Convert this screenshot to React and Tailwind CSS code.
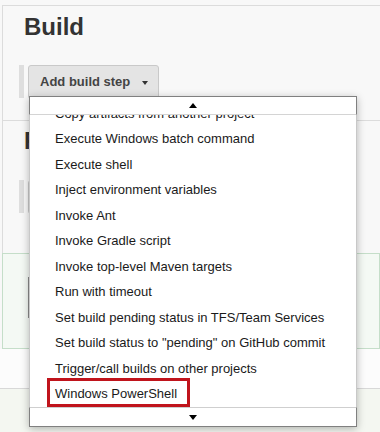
export default function App() {
  const items = [
    "Copy artifacts from another project",
    "Execute Windows batch command",
    "Execute shell",
    "Inject environment variables",
    "Invoke Ant",
    "Invoke Gradle script",
    "Invoke top-level Maven targets",
    "Run with timeout",
    "Set build pending status in TFS/Team Services",
    'Set build status to "pending" on GitHub commit',
    "Trigger/call builds on other projects",
    "Windows PowerShell",
  ];
  return (
    <div className="relative w-[380px] h-[432px] overflow-hidden bg-[#f8f8f8] font-['Liberation_Sans',Arial,sans-serif]">
      <div className="h-[5px]" />
      {/* Build section */}
      <section className="ml-[2px] h-[115px] border-t border-l border-[#dcdcdc] flex flex-col">
        <h1 className="ml-[21px] mt-[7px] text-[24px] leading-[28px] font-bold text-[#333]">Build</h1>
        <div className="mt-[24px] flex items-start gap-[4px] ml-[16px]">
          <div className="w-[5px] h-[33px] bg-[#dedede]" />
          <div className="w-[131px] h-[34px] rounded-[3px] border border-[#c9c9c9] bg-[#e4e4e4] flex items-center pl-[11px] pb-[1px] text-[13px] font-bold text-[#444]">
            <span>Add build step</span>
            <span className="ml-[12px] mt-[2px] w-0 h-0 border-l-[3.5px] border-r-[3.5px] border-t-[4px] border-l-transparent border-r-transparent border-t-[#333]" />
          </div>
        </div>
      </section>
      {/* Post-build section */}
      <section className="ml-[2px] h-[133px] border-t border-l border-[#dcdcdc] flex flex-col">
        <h2 className="ml-[21px] mt-[6px] text-[24px] leading-[28px] font-bold text-[#333]">Post-build Actions</h2>
        <div className="mt-[25px] flex items-start gap-[4px] ml-[16px]">
          <div className="w-[5px] h-[33px] bg-[#dedede]" />
          <div className="w-[170px] h-[34px] rounded-[3px] border border-[#c9c9c9] bg-[#e4e4e4]" />
        </div>
      </section>
      {/* Green box */}
      <div className="ml-[2px] h-[96px] border border-[#c5dec9] bg-[#f4f9f4] pt-[23px] pl-[25px]">
        <div className="w-[80px] h-[41px] border border-[#8a8a8a] bg-white" />
      </div>
      <div className="h-[40px] bg-[#fcfcfc] border-b border-[#d8d8d8]" />
      <div className="h-[60px] bg-[#f4f7f1]" />

      {/* Dropdown menu overlay */}
      <div className="absolute left-[29px] top-[96px] w-[328px] flex flex-col shadow-[0_2px_8px_rgba(0,0,0,0.28)]">
        <div className="h-[19px] bg-white border-t border-x border-b border-t-[#808080] border-x-[#808080] border-b-[#d4d4d4] flex items-center justify-center">
          <span className="w-0 h-0 border-l-[4.5px] border-r-[4.5px] border-b-[5px] border-l-transparent border-r-transparent border-b-black" />
        </div>
        <div className="h-[292px] bg-white border-x border-[#c8c8c8] overflow-hidden">
          <div className="mt-[-14.25px] flex flex-col">
            {items.map((t) => (
              <div key={t} className="h-[25.5px] leading-[25.5px] pl-[25px] text-[13px] text-[#1a1a1a] whitespace-nowrap">
                {t}
              </div>
            ))}
          </div>
        </div>
        <div className="h-[20px] bg-white border border-[#808080] border-t-[#cfcfcf] flex items-center justify-center">
          <span className="w-0 h-0 border-l-[4.5px] border-r-[4.5px] border-t-[5px] border-l-transparent border-r-transparent border-t-black" />
        </div>
      </div>

      {/* Red highlight annotation */}
      <div className="absolute left-[47px] top-[378px] w-[143px] h-[29px] border-[3px] border-[#c0141c]" />
    </div>
  );
}
